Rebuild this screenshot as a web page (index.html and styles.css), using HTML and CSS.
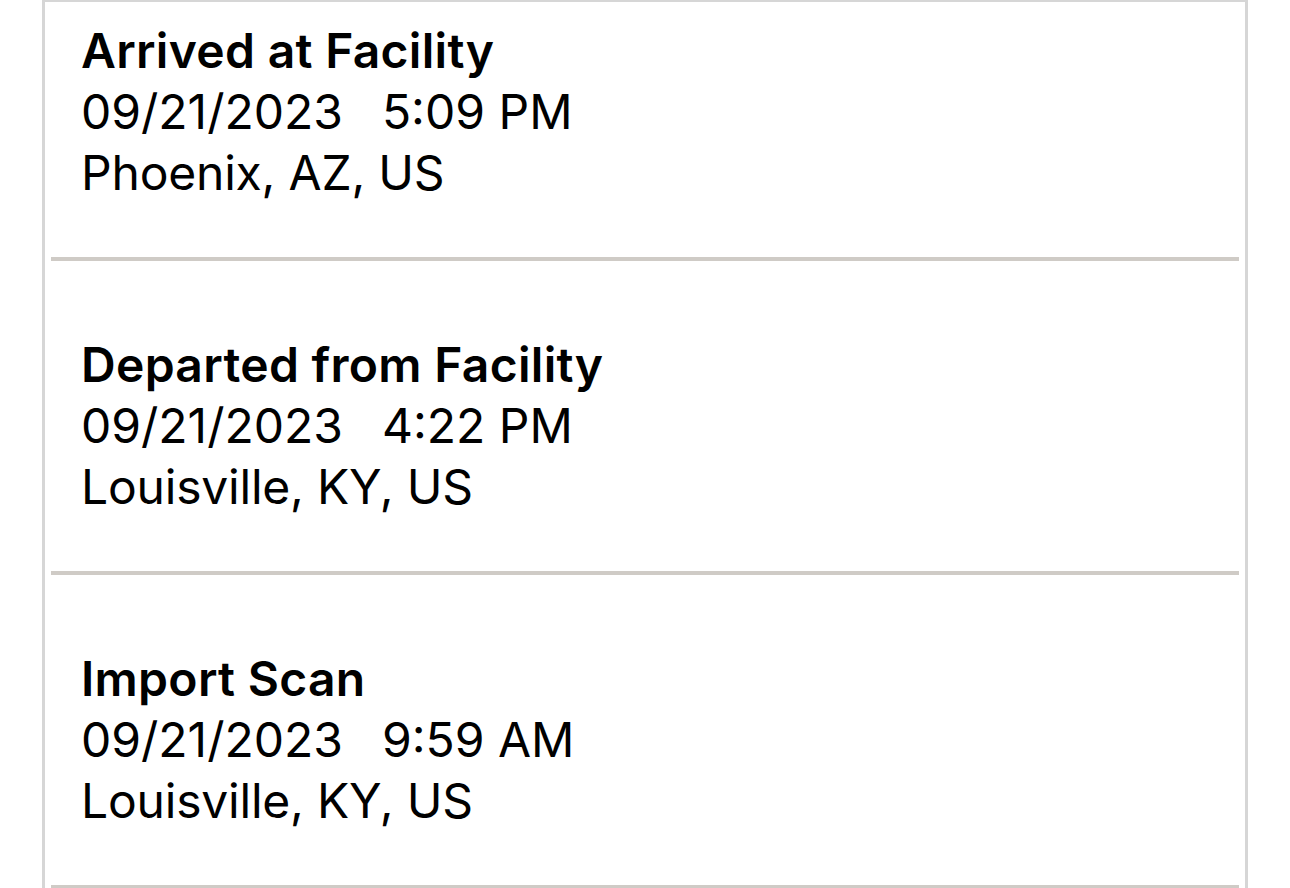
FILE: index.html
```html
<!DOCTYPE html>
<html lang="en">
<head>
  <meta charset="UTF-8" />
  <title>Tracking History</title>
  <link rel="stylesheet" href="styles.css">
</head>
<body>
  <div class="history">
    <div class="event first">
      <div class="status">Arrived at Facility</div>
      <div class="when">09/21/2023<span class="time">5:09 PM</span></div>
      <div class="place">Phoenix, AZ, US</div>
    </div>
    <div class="divider"></div>

    <div class="event">
      <div class="status">Departed from Facility</div>
      <div class="when">09/21/2023<span class="time">4:22 PM</span></div>
      <div class="place">Louisville, KY, US</div>
    </div>
    <div class="divider"></div>

    <div class="event">
      <div class="status">Import Scan</div>
      <div class="when">09/21/2023<span class="time">9:59 AM</span></div>
      <div class="place">Louisville, KY, US</div>
    </div>
    <div class="divider"></div>
  </div>
</body>
</html>
```

FILE: styles.css
```css
body {
  font-family: Inter, 'Noto Sans', sans-serif;
  background: #fff;
  color: #000;
  margin: 0;
  padding: 0;
}

.history {
  margin-left: 42px;
  width: 1200px;
  border-left: 3px solid #d6d6d6;
  border-right: 3px solid #d6d6d6;
  border-top: 2px solid #d6d6d6;
}

.event {
  padding: 73px 36px 54px;
  font-size: 48px;
  line-height: 61px;
}

.event.first {
  padding-top: 18px;
}

.status {
  font-weight: 620;
  letter-spacing: 0.3px;
}

.place {
  letter-spacing: -0.2px;
}

.time {
  margin-left: 39px;
}

.divider {
  height: 4px;
  margin: 0 6px;
  background: #cfcbc6;
}
```
